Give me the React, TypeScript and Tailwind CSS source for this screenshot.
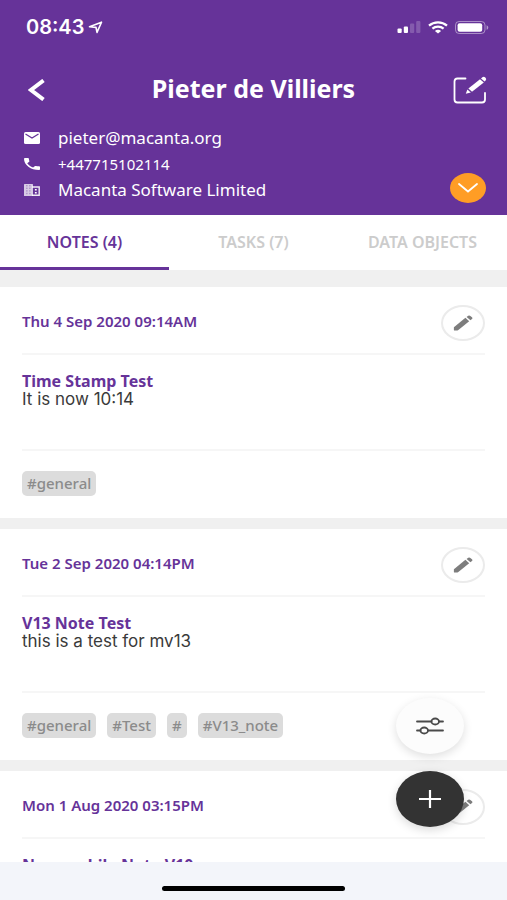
import { useState } from "react";

type Note = { date: string; title: string; body: string; tags: string[] };

const notes: Note[] = [
  { date: "Thu 4 Sep 2020 09:14AM", title: "Time Stamp Test", body: "It is now 10:14", tags: ["#general"] },
  {
    date: "Tue 2 Sep 2020 04:14PM",
    title: "V13 Note Test",
    body: "this is a test for mv13",
    tags: ["#general", "#Test", "#", "#V13_note"],
  },
  { date: "Mon 1 Aug 2020 03:15PM", title: "New mobile Note V10", body: "", tags: [] },
];

const tabs = ["NOTES (4)", "TASKS (7)", "DATA OBJECTS"];

function StatusBar() {
  return (
    <div className="flex h-[54px] items-center justify-between pl-[26px] pr-[18px]">
      <div className="flex items-center gap-1">
        <span className="font-['Inter',sans-serif] text-[20px] leading-6 font-semibold">08:43</span>
        <svg className="h-[13px] w-4" viewBox="0 0 16 13" fill="none" stroke="currentColor" strokeWidth="1.6" strokeLinejoin="round">
          <path d="M1.5 5.8 13.5 1.2 9 11.4 8 6.4Z" />
        </svg>
      </div>
      <div className="flex items-center gap-[7px]">
        <svg className="h-3 w-6" viewBox="0 0 24 12" fill="currentColor">
          <rect x="0.5" y="7.5" width="4.2" height="4.5" rx="1" />
          <rect x="6.8" y="5.5" width="4.2" height="6.5" rx="1" />
          <rect x="13" y="2.5" width="4.2" height="9.5" rx="1" opacity="0.2" />
          <rect x="19.2" y="0" width="4.2" height="12" rx="1" opacity="0.2" />
        </svg>
        <svg className="h-[13px] w-5" viewBox="0 0 20 13" fill="none" stroke="currentColor" strokeWidth="2.2">
          <path d="M1 4.6C6 0.2 14 0.2 19 4.6" />
          <path d="M4.4 7.6C7.6 4.9 12.4 4.9 15.6 7.6" />
          <path d="M10 12.6 6.9 9.9C8.6 8.5 11.4 8.5 13.1 9.9Z" fill="currentColor" stroke="none" />
        </svg>
        <svg className="h-[13px] w-[34px]" viewBox="0 0 34 13" fill="none">
          <rect x="0.5" y="0.5" width="29.5" height="12" rx="3.6" stroke="white" strokeOpacity="0.45" />
          <rect x="2.6" y="2.2" width="24.6" height="8.6" rx="2" fill="white" />
          <path d="M31.6 4.2C33.8 5 33.8 8 31.6 8.8Z" fill="white" fillOpacity="0.5" />
        </svg>
      </div>
    </div>
  );
}

function PencilIcon() {
  return (
    <svg className="h-4 w-5" viewBox="0 0 20 16" fill="#7d7d7d" aria-hidden="true">
      <path d="M0.9 12.2 12.4 2.8 16.2 6.2 5 15.2Q4.4 15.6 3.8 15.6H1.6Q0.9 15.6 0.9 15Z" />
      <path d="M13.6 2 15.2 0.8Q16.4 0.1 17.4 0.9L19.2 2.4Q19.9 3.2 19 4L17.4 5.2Z" />
    </svg>
  );
}

function NoteCard({ note }: { note: Note }) {
  return (
    <article className="shrink-0 bg-white px-[22px]">
      <div className="flex h-[68px] items-center justify-between border-b-2 border-[#f6f6f6] pt-[5px]">
        <time className="pb-[3px] text-[15px] leading-5 font-semibold text-[#663399]">{note.date}</time>
        <button
          type="button"
          aria-label="Edit note"
          className="flex h-9 w-11 items-center justify-center rounded-[50%] border-2 border-[#ebebeb] bg-white"
        >
          <PencilIcon />
        </button>
      </div>
      <div className="h-24 border-b-2 border-[#f6f6f6] pt-[17px]">
        <h2 className="text-[16px] leading-[18px] font-bold text-[#663399]">{note.title}</h2>
        <p className="font-['Inter',sans-serif] text-[17px] leading-[18px] text-[#3a3a3a]">{note.body}</p>
      </div>
      <ul className="flex h-[67px] items-center gap-[11px] pb-[3px]">
        {note.tags.map((tag) => (
          <li key={tag} className="rounded-[5px] bg-[#dcdcdc] px-[5px] text-[15px] leading-[25px] font-medium text-[#8b8b8b]">
            {tag}
          </li>
        ))}
      </ul>
    </article>
  );
}

export default function App() {
  const [active, setActive] = useState(0);
  return (
    <div className="relative flex h-screen flex-col overflow-hidden bg-white font-['Noto_Sans',sans-serif]">
      <header className="bg-[#663399] text-white">
        <StatusBar />
        <div className="flex h-[71px] items-center justify-between pr-5 pl-7">
          <button type="button" aria-label="Back" className="flex w-[26px]">
            <svg className="h-[22px] w-[17px]" viewBox="0 0 17 22" fill="none" stroke="currentColor" strokeWidth="4">
              <path d="M15.5 1.5 3 11 15.5 20.5" />
            </svg>
          </button>
          <h1 className="pb-1 text-[25px] leading-7 font-bold">Pieter de Villiers</h1>
          <button type="button" aria-label="Edit contact">
            <svg className="h-7 w-[34px]" viewBox="0 0 34 28" fill="none">
              <path
                d="M12.5 2.5H4.5Q1.5 2.5 1.5 5.5V23.5Q1.5 26.5 4.5 26.5H29Q32 26.5 32 23.5V17"
                stroke="currentColor"
                strokeWidth="1.8"
                strokeLinecap="round"
              />
              <path d="M15.4 12.6 27 3.2 30.8 6.4 19 15.8Z" fill="currentColor" />
              <path d="M14.4 13.6 17.8 16.6 12.8 17.8Z" fill="currentColor" />
              <path d="M28 2.4 29.4 1.3Q30.8 0.3 32.3 1.5 34 3 32.6 4.6L31.6 5.5Z" fill="currentColor" />
            </svg>
          </button>
        </div>
        <div className="flex items-end justify-between pr-[21px] pb-3 pl-6">
          <ul className="flex flex-col text-[17px] leading-[26px]">
            <li className="flex items-center gap-[18px]">
              <svg className="h-3 w-4" viewBox="0 0 16 12" fill="none">
                <rect width="16" height="12" rx="1.5" fill="white" />
                <path d="M1.5 2 8 6 14.5 2" stroke="#663399" strokeWidth="1.3" />
              </svg>
              <a href="mailto:pieter@macanta.org">pieter@macanta.org</a>
            </li>
            <li className="flex items-center gap-[18px]">
              <svg className="h-3 w-4" viewBox="3 3 18 18" preserveAspectRatio="none" fill="currentColor">
                <path d="M6.62 10.79c1.44 2.83 3.76 5.14 6.59 6.59l2.2-2.2c.27-.27.67-.36 1.02-.24 1.12.37 2.33.57 3.57.57.55 0 1 .45 1 1V20c0 .55-.45 1-1 1-9.39 0-17-7.61-17-17 0-.55.45-1 1-1h3.5c.55 0 1 .45 1 1 0 1.25.2 2.45.57 3.57.11.35.03.74-.25 1.02l-2.2 2.2z" />
              </svg>
              <a href="tel:+447715102114" className="text-[15px]">+447715102114</a>
            </li>
            <li className="flex items-center gap-[18px]">
              <svg className="h-3 w-4" viewBox="0 0 16 12" fill="none">
                <rect width="9" height="12" rx="0.5" fill="white" fillOpacity="0.75" />
                <path d="M2.9 1V11M5.9 1V11" stroke="#663399" strokeOpacity="0.55" strokeDasharray="1.4 1.2" />
                <path d="M8 3H15.2V11.3H8" stroke="white" strokeOpacity="0.9" strokeWidth="1.4" />
                <path d="M11.8 5V6.6M11.8 8V9.6" stroke="white" strokeWidth="1.8" />
              </svg>
              <span>Macanta Software Limited</span>
            </li>
          </ul>
          <button
            type="button"
            aria-label="Show more details"
            className="flex h-[30px] w-9 items-center justify-center rounded-[50%] bg-[#ff9d25]"
          >
            <svg className="h-[10px] w-5" viewBox="0 0 20 10" fill="none" stroke="white" strokeWidth="1.8" strokeLinecap="round">
              <path d="M1 1 10 8.5 19 1" />
            </svg>
          </button>
        </div>
      </header>

      <nav className="grid h-[55px] shrink-0 grid-cols-3">
        {tabs.map((tab, i) => (
          <button
            key={tab}
            type="button"
            onClick={() => setActive(i)}
            className={
              i === active
                ? "border-b-3 border-[#663399] pt-[2px] text-[16px] font-semibold whitespace-nowrap text-[#663399]"
                : "border-b-3 border-transparent pt-[2px] text-[16px] font-semibold whitespace-nowrap text-[#cccccc]"
            }
          >
            {tab}
          </button>
        ))}
      </nav>

      <main className="flex min-h-0 flex-1 flex-col gap-[11px] overflow-y-auto bg-[#f0f0f0] pt-[17px] [scrollbar-width:none]">
        {notes.map((note) => (
          <NoteCard key={note.date} note={note} />
        ))}
      </main>

      <div className="absolute right-[43px] bottom-[73px] flex flex-col items-center gap-[17px]">
        <button
          type="button"
          aria-label="Filter notes"
          className="flex h-14 w-[68px] items-center justify-center rounded-[50%] bg-[#fcfcfc] shadow-[0_3px_10px_rgba(0,0,0,0.13)]"
        >
          <svg className="h-[18px] w-7" viewBox="0 0 28 18" fill="none" stroke="#4a4a4a" strokeWidth="1.8" strokeLinecap="round">
            <path d="M1 4.5H15.5M23 4.5H27M1 13.5H4.5M12 13.5H27" />
            <ellipse cx="19.2" cy="4.5" rx="3.8" ry="3" />
            <ellipse cx="8.2" cy="13.5" rx="3.8" ry="3" />
          </svg>
        </button>
        <button
          type="button"
          aria-label="Add note"
          className="flex h-14 w-[68px] items-center justify-center rounded-[50%] bg-[#333333] shadow-[0_3px_10px_rgba(0,0,0,0.15)]"
        >
          <svg className="h-[18px] w-[22px]" viewBox="0 0 22 18" fill="none" stroke="white" strokeWidth="2.2">
            <path d="M0 9H22M11 0V18" />
          </svg>
        </button>
      </div>

      <footer className="flex h-[38px] shrink-0 items-center justify-center bg-[#f3f5fa] pt-[14px]">
        <div className="h-[5px] w-[36%] rounded-full bg-black" />
      </footer>
    </div>
  );
}
